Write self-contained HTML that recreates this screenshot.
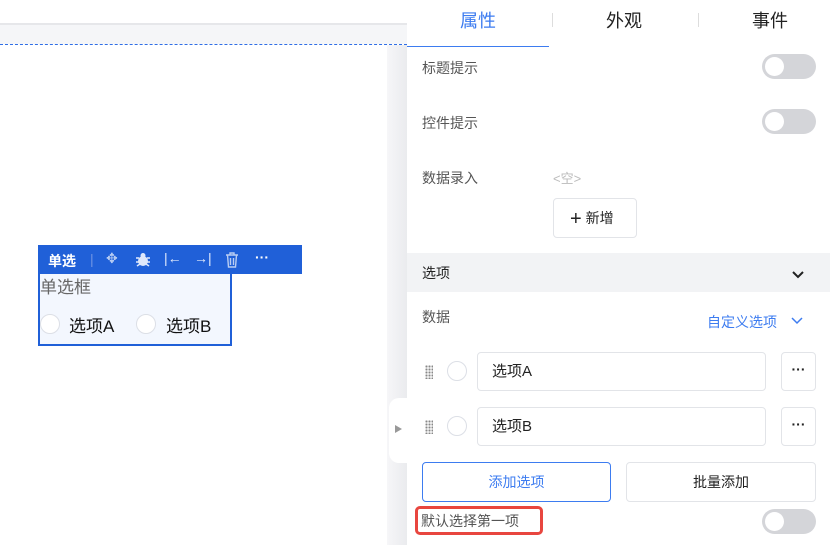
<!DOCTYPE html>
<html><head><meta charset="utf-8"><style>
*{margin:0;padding:0;box-sizing:border-box}
body{width:830px;height:545px;overflow:hidden;position:relative;background:#fff;font-family:"Liberation Sans","Noto Sans CJK SC",sans-serif;font-size:14px;color:#333}
.a{position:absolute}
.tog{position:absolute;width:54px;height:25px;border-radius:13px;background:#d4d5d9}
.tog:after{content:"";position:absolute;left:3px;top:3px;width:19px;height:19px;border-radius:50%;background:#fff}
.lbl{position:absolute;left:422px;color:#555;font-size:14px}
.rad{position:absolute;width:20px;height:20px;border:1px solid #dcdfe6;border-radius:50%;background:#fff}
.inp{position:absolute;left:477px;width:289px;height:39px;border:1px solid #e2e4e8;border-radius:4px;padding-left:14px;line-height:37px;color:#222;font-size:15px}
.more{position:absolute;left:781px;width:35px;height:39px;border:1px solid #e2e4e8;border-radius:4px;text-align:center;line-height:32px;font-weight:bold;color:#222}
.drag{position:absolute;left:425px;width:8px;height:14px;background-image:radial-gradient(circle,#888 1px,transparent 1.2px);background-size:3px 3px}
</style></head><body>
<div class="a" style="left:0;top:23px;width:407px;height:2px;background:#e6e7ea"></div>
<div class="a" style="left:0;top:25px;width:407px;height:19px;background:#f5f6f8"></div>
<div class="a" style="left:0;top:44px;width:407px;border-top:1px dashed #2f6ee6"></div>
<div class="a" style="left:387px;top:45px;width:20px;height:500px;background:linear-gradient(90deg,#f6f6f8,#eaebee)"></div>
<div class="a" style="left:389px;top:398px;width:22px;height:65px;background:#fff;border-radius:10px 0 0 10px"></div>
<div class="a" style="left:395px;top:425px;width:0;height:0;border-left:7px solid #999;border-top:4px solid transparent;border-bottom:4px solid transparent"></div>

<div class="a" style="left:38px;top:245px;width:264px;height:29px;background:#2060d8;color:#fff;font-size:14px">
<span class="a" style="left:10px;top:6px;font-weight:bold">单选</span>
<span class="a" style="left:52px;top:6px;color:#6f95e4">|</span>
<span class="a" style="left:68px;top:5px;color:#b9cdf3">✥</span>
<svg class="a" style="left:97px;top:7px" width="16" height="15" viewBox="0 0 16 15"><ellipse cx="8" cy="9" rx="5" ry="5" fill="#dfe8fb"/><circle cx="8" cy="3.5" r="2.5" fill="#dfe8fb"/><path d="M1 6h3M12 6h3M1 10h3M12 10h3M2 14l3-2M14 14l-3-2" stroke="#dfe8fb" stroke-width="1.5"/></svg>
<span class="a" style="left:126px;top:5px;color:#dfe8fb">|←</span>
<span class="a" style="left:156px;top:5px;color:#dfe8fb">→|</span>
<svg class="a" style="left:187px;top:7px" width="14" height="16" viewBox="0 0 14 16"><path d="M1 3h12M5 3V1h4v2M2.5 3l1 12h7l1-12M5.5 6v7M8.5 6v7" stroke="#b9cdf3" stroke-width="1.4" fill="none"/></svg>
<span class="a" style="left:217px;top:4px;font-weight:bold">···</span>
</div>
<div class="a" style="left:38px;top:274px;width:194px;height:72px;border:2px solid #2060d8;border-top:none;background:#f3f7fe">
<span class="a" style="left:0;top:-1px;font-size:17px;color:#666">单选框</span>
<div class="rad" style="left:0;top:40px"></div><span class="a" style="left:29px;top:38px;font-size:17px;color:#111">选项A</span>
<div class="rad" style="left:96px;top:40px"></div><span class="a" style="left:126px;top:38px;font-size:17px;color:#111">选项B</span>
</div>

<div class="a" style="left:407px;top:0;width:423px;height:545px;background:#fff"></div>
<span class="a" style="left:460px;top:7px;font-size:18px;color:#3d7cf0">属性</span>
<span class="a" style="left:606px;top:7px;font-size:18px;color:#222">外观</span>
<span class="a" style="left:752px;top:7px;font-size:18px;color:#222">事件</span>
<div class="a" style="left:552px;top:13px;width:1px;height:14px;background:#ddd"></div>
<div class="a" style="left:698px;top:13px;width:1px;height:14px;background:#ddd"></div>
<div class="a" style="left:407px;top:46px;width:142px;height:1px;background:#3d7cf0"></div>

<span class="lbl" style="top:58px">标题提示</span><div class="tog" style="left:762px;top:54px"></div>
<span class="lbl" style="top:113px">控件提示</span><div class="tog" style="left:762px;top:109px"></div>
<span class="lbl" style="top:168px">数据录入</span>
<span class="a" style="left:553px;top:168px;color:#bbb;font-size:13px">&lt;空&gt;</span>
<div class="a" style="left:553px;top:198px;width:84px;height:40px;border:1px solid #e2e4e8;border-radius:4px;color:#222;line-height:38px;padding-left:16px"><span style="font-size:20px;vertical-align:-2px;font-weight:300">+</span> 新增</div>

<div class="a" style="left:407px;top:253px;width:423px;height:39px;background:#f2f3f5"></div>
<span class="a" style="left:422px;top:263px;color:#222">选项</span>
<svg class="a" style="left:791px;top:270px" width="14" height="10"><path d="M2 2l5 5 5-5" stroke="#222" stroke-width="2" fill="none"/></svg>
<span class="lbl" style="top:307px">数据</span>
<span class="a" style="left:707px;top:312px;color:#3d7cf0">自定义选项</span>
<svg class="a" style="left:790px;top:316px" width="14" height="10"><path d="M2 2l5 5 5-5" stroke="#3d7cf0" stroke-width="1.5" fill="none"/></svg>

<div class="drag" style="top:365px"></div><div class="rad" style="left:447px;top:361px"></div>
<div class="inp" style="top:352px">选项A</div><div class="more" style="top:352px">···</div>
<div class="drag" style="top:420px"></div><div class="rad" style="left:447px;top:416px"></div>
<div class="inp" style="top:407px">选项B</div><div class="more" style="top:407px">···</div>

<div class="a" style="left:422px;top:462px;width:189px;height:40px;border:1px solid #3d7cf0;border-radius:4px;text-align:center;line-height:38px;color:#3d7cf0">添加选项</div>
<div class="a" style="left:626px;top:462px;width:190px;height:40px;border:1px solid #e2e4e8;border-radius:4px;text-align:center;line-height:38px;color:#222">批量添加</div>
<div class="a" style="left:415px;top:506px;width:128px;height:29px;border:3px solid #e8463f;border-radius:5px"></div>
<span class="a" style="left:421px;top:511px;color:#555">默认选择第一项</span>
<div class="tog" style="left:762px;top:509px"></div>
</body></html>
